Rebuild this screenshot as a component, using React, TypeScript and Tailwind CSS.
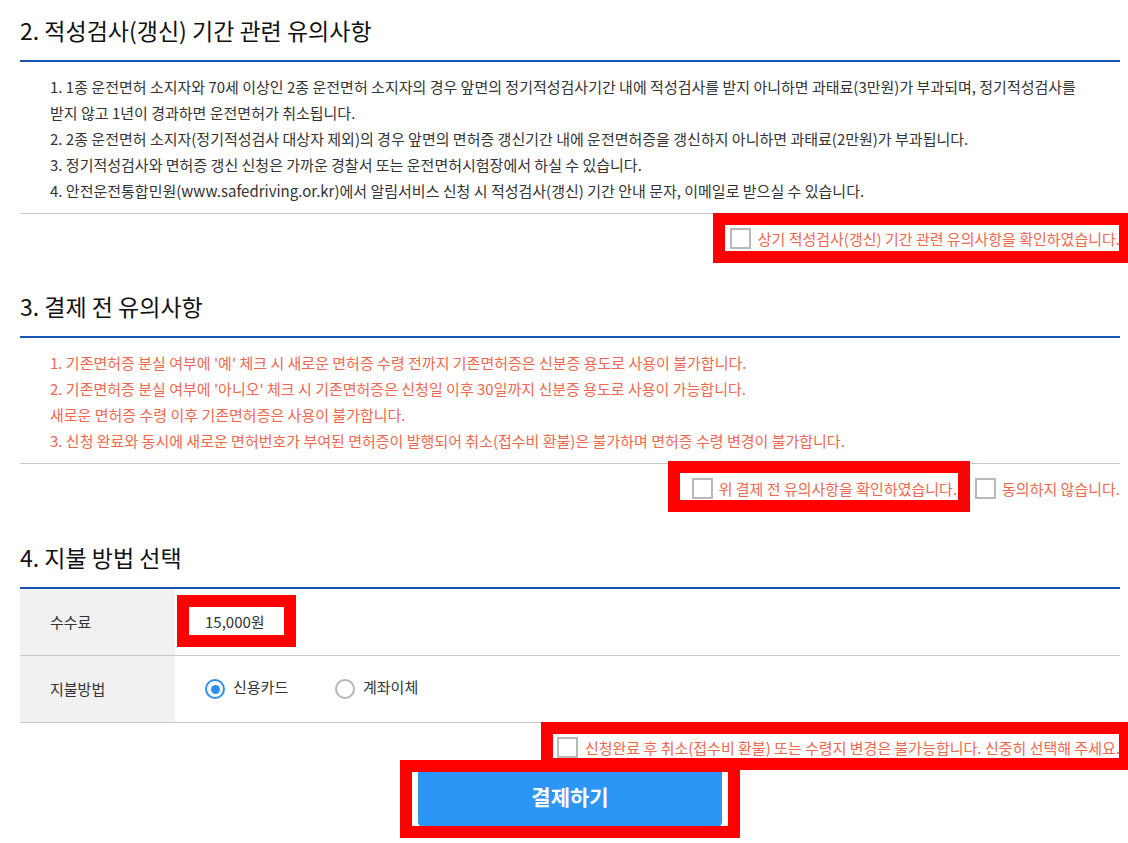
import React from "react";

const Check = () => (
  <span className="inline-block w-[21px] h-[21px] shrink-0 border-2 border-[#b9b9b9] bg-white" />
);

const RedBox = ({ cls }: { cls: string }) => (
  <span className={"pointer-events-none absolute border-[#ff0000] " + cls} />
);

const Heading = ({ children, mt }: { children: React.ReactNode; mt: string }) => (
  <h2 className={"h-[32px] leading-[32px] text-[23px] text-[#111] font-normal " + mt}>
    {children}
  </h2>
);

export default function App() {
  return (
    <div className="w-[1128px] h-[843px] overflow-hidden bg-white font-['Noto_Sans_CJK_KR','Noto_Sans',sans-serif]">
      <div className="mx-[20px] w-[1100px]">
        {/* Section 2 */}
        <Heading mt="mt-[14px]">2. 적성검사(갱신) 기간 관련 유의사항</Heading>
        <div className="mt-[14px] border-t-2 border-[#1553b6] border-b border-b-[#c8c8c8] pt-[12px] pb-[9px] pl-[30px] text-[15px] leading-[26px] text-[#333]">
          <div className="whitespace-nowrap">
            1. 1종 운전면허 소지자와 70세 이상인 2종 운전면허 소지자의 경우 앞면의 정기적성검사기간 내에 적성검사를 받지 아니하면 과태료(3만원)가 부과되며, 정기적성검사를
          </div>
          <div className="whitespace-nowrap">받지 않고 1년이 경과하면 운전면허가 취소됩니다.</div>
          <div className="whitespace-nowrap">
            2. 2종 운전면허 소지자(정기적성검사 대상자 제외)의 경우 앞면의 면허증 갱신기간 내에 운전면허증을 갱신하지 아니하면 과태료(2만원)가 부과됩니다.
          </div>
          <div className="whitespace-nowrap">
            3. 정기적성검사와 면허증 갱신 신청은 가까운 경찰서 또는 운전면허시험장에서 하실 수 있습니다.
          </div>
          <div className="whitespace-nowrap">
            4. 안전운전통합민원(www.safedriving.or.kr)에서 알림서비스 신청 시 적성검사(갱신) 기간 안내 문자, 이메일로 받으실 수 있습니다.
          </div>
        </div>
        <div className="mt-[14px] flex justify-end h-[21px]">
          <label className="relative flex items-center gap-[7px] text-[15px] text-[#f0674f] whitespace-nowrap">
            <Check />
            <span className="leading-[21px]">상기 적성검사(갱신) 기간 관련 유의사항을 확인하였습니다.</span>
            <RedBox cls="-left-[17px] -right-[8px] -top-[15px] -bottom-[14px] border-[12px] border-r-[9px]" />
          </label>
        </div>

        {/* Section 3 */}
        <Heading mt="mt-[41px]">3. 결제 전 유의사항</Heading>
        <div className="mt-[14px] border-t-2 border-[#1553b6] border-b border-b-[#c8c8c8] pt-[12px] pb-[9px] pl-[30px] text-[15px] leading-[26px] text-[#f0674f]">
          <div className="whitespace-nowrap">
            1. 기존면허증 분실 여부에 '예' 체크 시 새로운 면허증 수령 전까지 기존면허증은 신분증 용도로 사용이 불가합니다.
          </div>
          <div className="whitespace-nowrap">
            2. 기존면허증 분실 여부에 '아니오' 체크 시 기존면허증은 신청일 이후 30일까지 신분증 용도로 사용이 가능합니다.
          </div>
          <div className="whitespace-nowrap">새로운 면허증 수령 이후 기존면허증은 사용이 불가합니다.</div>
          <div className="whitespace-nowrap">
            3. 신청 완료와 동시에 새로운 면허번호가 부여된 면허증이 발행되어 취소(접수비 환불)은 불가하며 면허증 수령 변경이 불가합니다.
          </div>
        </div>
        <div className="mt-[14px] flex justify-end items-center h-[21px] text-[15px] text-[#f0674f] whitespace-nowrap">
          <label className="relative flex items-center gap-[6px]">
            <Check />
            <span className="leading-[21px]">위 결제 전 유의사항을 확인하였습니다.</span>
            <RedBox cls="-left-[24px] -right-[13px] -top-[17px] -bottom-[13px] border-[12px]" />
          </label>
          <label className="ml-[18px] flex items-center gap-[6px]">
            <Check />
            <span className="leading-[21px]">동의하지 않습니다.</span>
          </label>
        </div>

        {/* Section 4 */}
        <Heading mt="mt-[42px]">4. 지불 방법 선택</Heading>
        <div className="mt-[14px] border-t-2 border-[#1553b6] text-[15px] text-[#333]">
          <div className="flex h-[67px] border-b border-[#c8c8c8]">
            <div className="w-[155px] bg-[#f1f1f1] flex items-center pl-[30px]">수수료</div>
            <div className="flex-1 flex items-center pl-[30px]">
              <span className="relative leading-[20px]">
                15,000원
                <RedBox cls="-left-[28px] -right-[31px] -top-[17px] -bottom-[15px] border-[12px]" />
              </span>
            </div>
          </div>
          <div className="flex h-[67px] border-b border-[#c8c8c8]">
            <div className="w-[155px] bg-[#f1f1f1] flex items-center pl-[30px]">지불방법</div>
            <div className="flex-1 flex items-center pl-[30px]">
              <label className="flex items-center gap-[8px] w-[130px]">
                <span className="w-[20px] h-[20px] rounded-full border-2 border-[#2f8ff0] flex items-center justify-center">
                  <span className="w-[9px] h-[9px] rounded-full bg-[#2f8ff0]" />
                </span>
                <span className="-mt-[3px]">신용카드</span>
              </label>
              <label className="flex items-center gap-[8px]">
                <span className="w-[20px] h-[20px] rounded-full border-2 border-[#b5b5b5]" />
                <span className="-mt-[3px]">계좌이체</span>
              </label>
            </div>
          </div>
        </div>
        <div className="mt-[14px] flex justify-end h-[21px]">
          <label className="relative flex items-center gap-[7px] text-[15px] text-[#f0674f] whitespace-nowrap">
            <Check />
            <span className="leading-[21px]">신청완료 후 취소(접수비 환불) 또는 수령지 변경은 불가능합니다. 신중히 선택해 주세요.</span>
            <RedBox cls="-left-[16px] -right-[8px] -top-[15px] -bottom-[12px] border-[12px] border-r-[9px]" />
          </label>
        </div>
        <div className="mt-[9px] flex justify-center">
          <div className="relative">
            <button className="w-[304px] h-[60px] rounded-[5px] bg-[#2b96f6] text-white text-[21px] font-bold">
              결제하기
            </button>
            <RedBox cls="-left-[18px] -right-[18px] -top-[7px] -bottom-[11px] border-[12px]" />
          </div>
        </div>
      </div>
    </div>
  );
}
